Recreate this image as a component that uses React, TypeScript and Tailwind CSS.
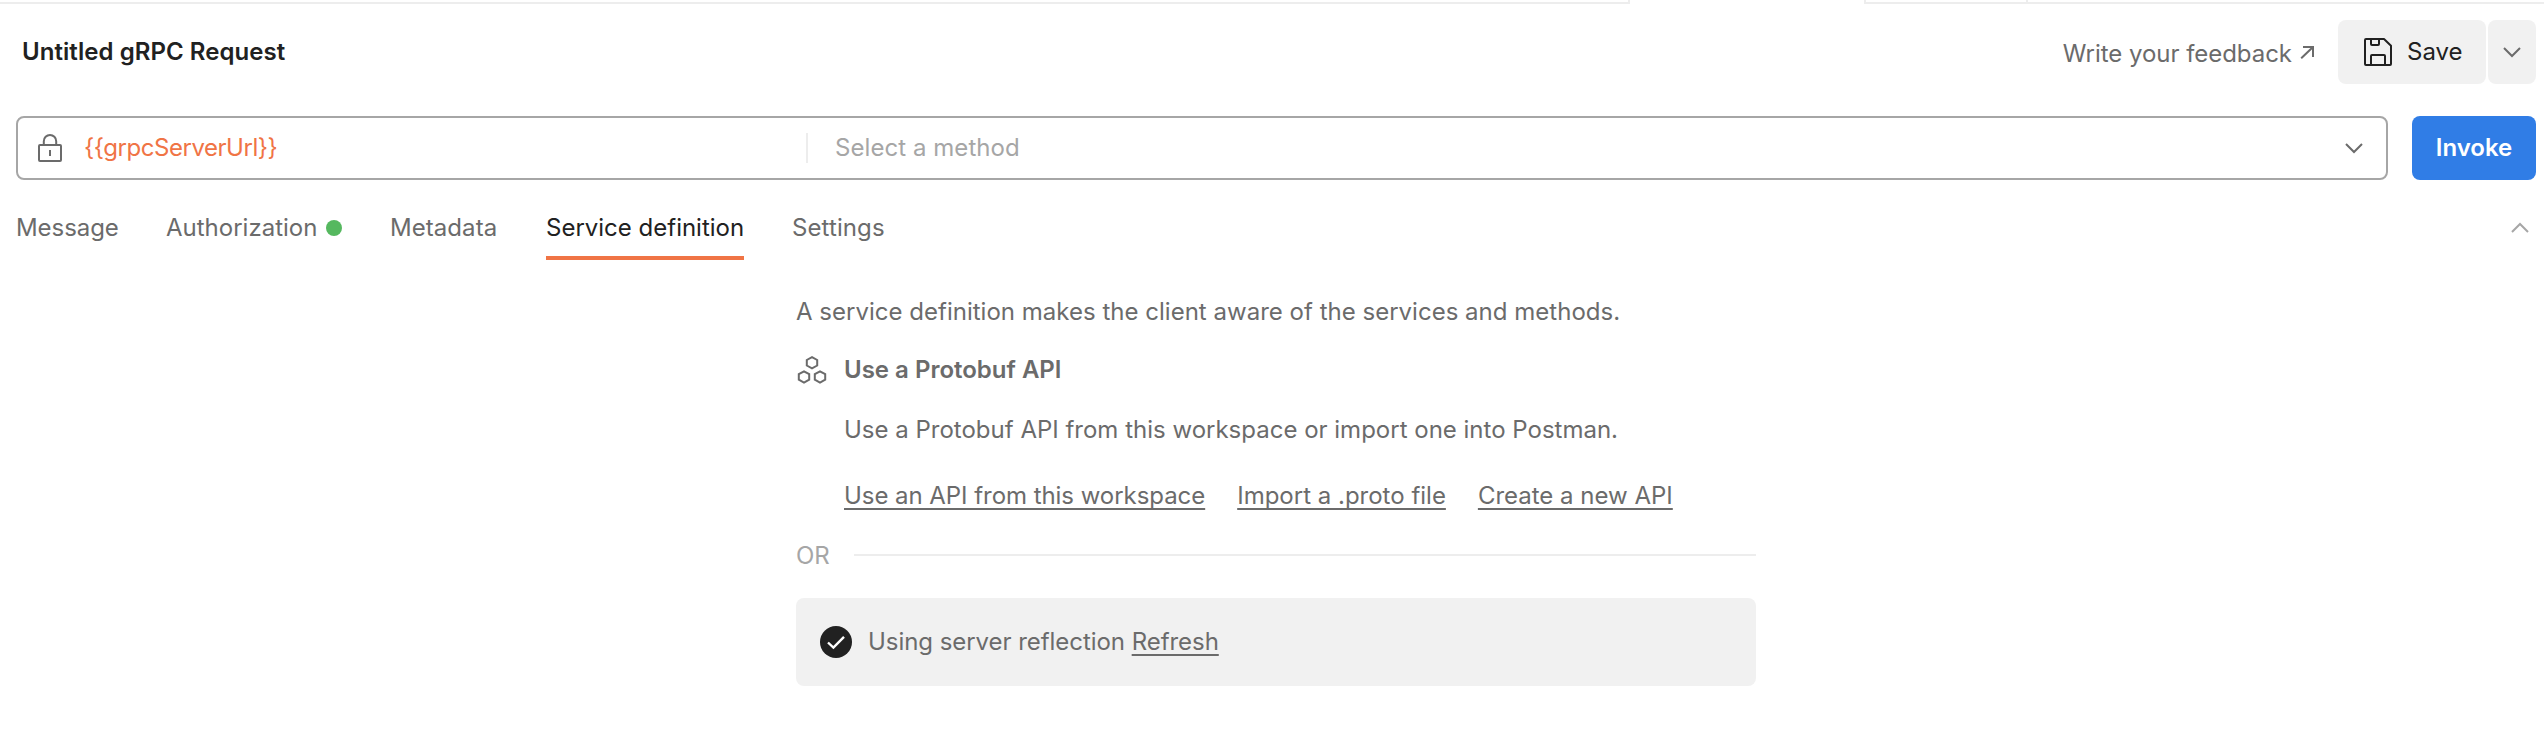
import type { ReactNode } from 'react';

function Chevron({ up = false, className }: { up?: boolean; className: string }) {
  return (
    <svg width="18" height="12" viewBox="0 0 18 12" fill="none" stroke="currentColor" strokeWidth="2" className={className}>
      <path d={up ? 'M1 10L9 2L17 10' : 'M1 2L9 10L17 2'} />
    </svg>
  );
}

function LockIcon() {
  return (
    <svg width="32" height="32" viewBox="0 0 32 32" fill="none" stroke="#6b6b6b" strokeWidth="2">
      <rect x="5" y="13" width="22" height="16" rx="1" />
      <path d="M9.8 13V9.2a6.2 6.2 0 0 1 12.4 0V13M16 18v6" />
    </svg>
  );
}

function SaveIcon() {
  return (
    <svg width="32" height="32" viewBox="0 0 32 32" fill="none" stroke="#212121" strokeWidth="2" strokeLinejoin="round">
      <path d="M4 3H22L29 9.7V28A1 1 0 0 1 28 29H4A1 1 0 0 1 3 28V4A1 1 0 0 1 4 3Z" />
      <path d="M9 3V8A1 1 0 0 0 10 9H16A1 1 0 0 0 17 8V3M9 29V20A1 1 0 0 1 10 19H22A1 1 0 0 1 23 20V29" />
    </svg>
  );
}

function ProtobufIcon() {
  return (
    <svg width="32" height="32" viewBox="0 0 32 32" fill="none" stroke="#6b6b6b" strokeWidth="2">
      <path d="M16 3.1L21.2 6V11.5L16 14.4L10.8 11.5V6Z" />
      <path d="M8 17.3L13.2 20.2V25.7L8 28.6L2.8 25.7V20.2Z" />
      <path d="M24 17.3L29.2 20.2V25.7L24 28.6L18.8 25.7V20.2Z" />
    </svg>
  );
}

function Link({ className = '', children }: { className?: string; children: ReactNode }) {
  return (
    <a className={`underline decoration-2 underline-offset-4 [text-decoration-skip-ink:none] ${className}`}>{children}</a>
  );
}

export default function App() {
  return (
    <div className="flex h-[742px] w-full flex-col overflow-hidden bg-white font-['Inter',sans-serif] text-2xl leading-10 text-[#6b6b6b] whitespace-nowrap [font-optical-sizing:none]">
      <div className="flex h-1 shrink-0">
        <div className="w-[1630px] border-r-2 border-b-2 border-[#ededed]" />
        <div className="w-[234px]" />
        <div className="w-[164px] border-x-2 border-b-2 border-[#ededed]" />
        <div className="flex-1 border-b-2 border-[#ededed]" />
      </div>

      <header className="mt-4 flex h-16 shrink-0 items-center pl-[22px] pr-2">
        <h1 className="flex-1 font-semibold tracking-[0.06px] text-[#212121]">Untitled gRPC Request</h1>
        <a className="flex items-center pt-1">
          <span className="tracking-[-0.04px]">Write your feedback</span>
          <svg width="14" height="13" viewBox="0 0 14 13" fill="none" stroke="currentColor" strokeWidth="2" className="mb-[3px] ml-2">
            <path d="M3 1H13V11M13 1L1.2 12.3" />
          </svg>
        </a>
        <div className="ml-6 flex gap-0.5">
          <button className="flex h-16 w-[148px] items-center rounded-lg bg-[#f1f1f1] pl-6 text-[#212121]">
            <SaveIcon />
            <span className="ml-[13px]">Save</span>
          </button>
          <button className="flex h-16 w-12 items-center justify-center rounded-lg bg-[#f1f1f1]">
            <Chevron className="text-[#6b6b6b]" />
          </button>
        </div>
      </header>

      <div className="mt-8 flex h-16 shrink-0 gap-6 pl-4 pr-2">
        <div className="flex flex-1 items-center rounded-lg border-2 border-[#a6a6a6]">
          <div className="flex w-[788px] items-center pl-4">
            <LockIcon />
            <span className="ml-[18px] tracking-[-0.46px] text-[#f07445]">{'{{grpcServerUrl}}'}</span>
          </div>
          <div className="h-[30px] w-0.5 bg-[#ededed]" />
          <span className="ml-[27px] flex-1 tracking-[0.06px] text-[#a6a6a6]">Select a method</span>
          <Chevron className="mr-[23px]" />
        </div>
        <button className="w-[124px] rounded-lg bg-[#307de6] font-semibold text-white">Invoke</button>
      </div>

      <nav className="mt-7 flex h-[52px] shrink-0 gap-12 pl-4 pr-[15px]">
        <span className="w-[102px] tracking-[-0.06px]">Message</span>
        <span className="flex w-44 justify-between">
          Authorization
          <i className="mt-3 size-4 rounded-full bg-[#55b85f]" />
        </span>
        <span className="w-[108px] tracking-[0.06px]">Metadata</span>
        <span className="w-[198px] border-b-4 border-[#f07445] text-[#212121]">Service definition</span>
        <span className="flex-1 tracking-[0.1px]">Settings</span>
        <Chevron up className="mt-[14px] text-[#a6a6a6]" />
      </nav>

      <main className="ml-[796px] mt-8 w-[960px]">
        <p className="tracking-[0.015px]">A service definition makes the client aware of the services and methods.</p>
        <section className="mt-[18px] flex gap-4">
          <div className="pt-1"><ProtobufIcon /></div>
          <div>
            <h2 className="font-semibold">Use a Protobuf API</h2>
            <p className="mt-5">Use a Protobuf API from this workspace or import one into Postman.</p>
            <div className="mt-[26px] flex gap-8">
              <Link className="tracking-[-0.05px]">Use an API from this workspace</Link>
              <Link>Import a .proto file</Link>
              <Link>Create a new API</Link>
            </div>
          </div>
        </section>
        <div className="mt-5 flex items-center text-[#a6a6a6]">
          <span className="w-[58px]">OR</span>
          <div className="mb-0.5 h-0.5 flex-1 bg-[#ededed]" />
        </div>
        <div className="mt-[22px] flex h-[88px] items-center rounded-lg bg-[#f1f1f1] pl-6">
          <svg width="32" height="32" viewBox="0 0 32 32" fill="none">
            <circle cx="16" cy="16" r="16" fill="#212121" />
            <path d="M8 16.5L13.4 21.6L24 10.8" stroke="#fff" strokeWidth="2.4" />
          </svg>
          <p className="ml-4 tracking-[-0.05px]">Using server reflection <Link>Refresh</Link></p>
        </div>
      </main>
    </div>
  );
}
